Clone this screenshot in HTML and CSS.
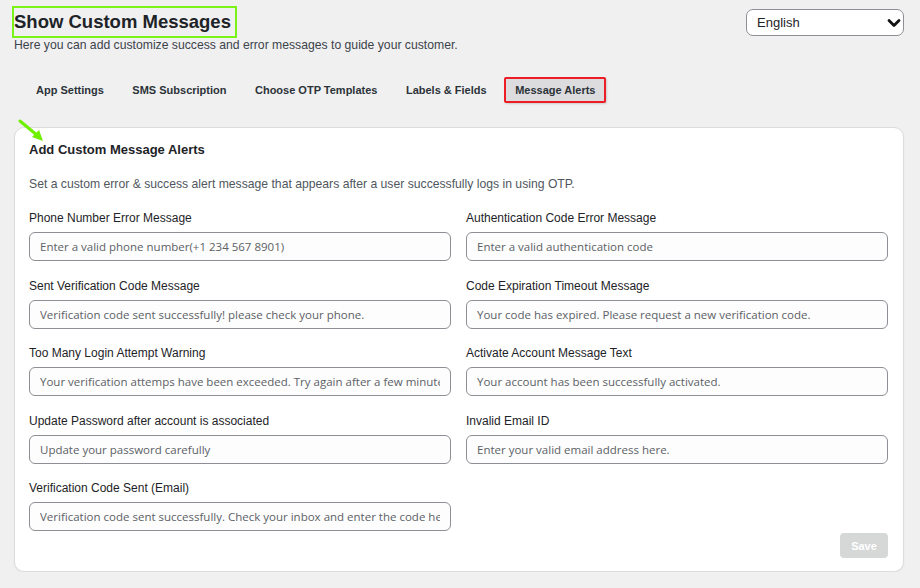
FILE: index.html
```html
<!DOCTYPE html>
<html lang="en">
<head>
  <meta charset="UTF-8" />
  <meta name="viewport" content="width=device-width, initial-scale=1.0"/>
  <title>Show Custom Messages</title>
  <link rel="stylesheet" href="styles.css">
</head>
<body>
  <div class="page">
    <div class="header">
      <div class="intro">
        <h1 class="title">Show Custom Messages</h1>
        <p class="subtitle">Here you can add customize success and error messages to guide your customer.</p>
      </div>
      <div class="lang">
        <select class="lang-select">
          <option>English</option>
        </select>
        <svg class="lang-caret" width="14" height="10" viewBox="0 0 14 10">
          <path d="M2 2.5 L7 7.5 L12 2.5" fill="none" stroke="#111" stroke-width="2.8" stroke-linecap="round" stroke-linejoin="round"/>
        </svg>
      </div>
    </div>

    <nav class="tabs">
      <a class="tab">App Settings</a>
      <a class="tab">SMS Subscription</a>
      <a class="tab">Choose OTP Templates</a>
      <a class="tab">Labels &amp; Fields</a>
      <a class="tab active">Message Alerts</a>
    </nav>

    <div class="card">
      <svg class="pointer" width="30" height="26" viewBox="0 0 30 26">
        <line x1="2" y1="2" x2="20" y2="17" stroke="#6ef000" stroke-width="3" stroke-linecap="round"/>
        <path d="M14 18 L25 22 L21 11 Z" fill="#6ef000"/>
      </svg>
      <h2 class="card-title">Add Custom Message Alerts</h2>
      <p class="card-desc">Set a custom error &amp; success alert message that appears after a user successfully logs in using OTP.</p>

      <div class="fields">
        <div class="field">
          <label>Phone Number Error Message</label>
          <input type="text" placeholder="Enter a valid phone number(+1 234 567 8901)">
        </div>
        <div class="field">
          <label>Authentication Code Error Message</label>
          <input type="text" placeholder="Enter a valid authentication code">
        </div>
        <div class="field">
          <label>Sent Verification Code Message</label>
          <input type="text" placeholder="Verification code sent successfully! please check your phone.">
        </div>
        <div class="field">
          <label>Code Expiration Timeout Message</label>
          <input type="text" placeholder="Your code has expired. Please request a new verification code.">
        </div>
        <div class="field">
          <label>Too Many Login Attempt Warning</label>
          <input type="text" placeholder="Your verification attemps have been exceeded. Try again after a few minutes.">
        </div>
        <div class="field">
          <label>Activate Account Message Text</label>
          <input type="text" placeholder="Your account has been successfully activated.">
        </div>
        <div class="field">
          <label>Update Password after account is associated</label>
          <input type="text" placeholder="Update your password carefully">
        </div>
        <div class="field">
          <label>Invalid Email ID</label>
          <input type="text" placeholder="Enter your valid email address here.">
        </div>
        <div class="field">
          <label>Verification Code Sent (Email)</label>
          <input type="text" placeholder="Verification code sent successfully. Check your inbox and enter the code here.">
        </div>
      </div>

      <div class="actions">
        <button class="save" disabled>Save</button>
      </div>
    </div>
  </div>
</body>
</html>
```

FILE: styles.css
```css
body {
  margin: 0;
  background: #f0f0f1;
  color: #1d2327;
  font-family: "Liberation Sans", Arial, sans-serif;
}

.page {
  padding: 6px 16px 0 12px;
}

.header {
  display: flex;
  justify-content: space-between;
  align-items: flex-start;
}

.title {
  display: inline-block;
  margin: 0;
  padding: 0 4px 0 0;
  border: 2px solid #7cf318;
  font-size: 18.5px;
  line-height: 28px;
  font-weight: bold;
  color: #1d2327;
}

.subtitle {
  margin: 0 0 0 2px;
  font-size: 12.2px;
  line-height: 14px;
  color: #3c434a;
}

.lang {
  position: relative;
  margin-top: 3px;
}

.lang-select {
  appearance: none;
  width: 158px;
  height: 27px;
  padding: 0 10px;
  border: 1px solid #8c8f94;
  border-radius: 7px;
  background: #fff;
  font-family: "Liberation Sans", Arial, sans-serif;
  font-size: 13px;
  color: #1d2327;
}

.lang-caret {
  position: absolute;
  right: 3px;
  top: 9px;
}

.tabs {
  display: flex;
  gap: 6.5px;
  margin: 25px 0 0 13px;
}

.tab {
  padding: 4px 9px;
  border: 2px solid transparent;
  border-radius: 2px;
  font-size: 11px;
  line-height: 14px;
  font-weight: bold;
  color: #2c3338;
}

.tab.active {
  background: #dcdcde;
  border-color: #ee1c25;
  box-shadow: 1px 1px 2px rgba(0, 0, 0, 0.15);
}

.card {
  position: relative;
  margin: 24px 0 0 2px;
  padding: 14px 15px 13px 14px;
  background: #fff;
  border: 1px solid #dcdcde;
  border-radius: 10px;
  box-shadow: 0 1px 2px rgba(0, 0, 0, 0.05);
}

.pointer {
  position: absolute;
  left: 3px;
  top: -9px;
}

.card-title {
  margin: 0;
  font-size: 13px;
  line-height: 16px;
  font-weight: bold;
  color: #1d2327;
}

.card-desc {
  margin: 19px 0 0;
  font-size: 12.2px;
  line-height: 14px;
  color: #50575e;
}

.fields {
  display: grid;
  grid-template-columns: 1fr 1fr;
  column-gap: 15px;
  row-gap: 17.5px;
  margin-top: 20px;
}

.field label {
  display: block;
  margin-bottom: 7px;
  font-size: 12px;
  line-height: 14px;
  color: #1d2327;
}

.field input {
  box-sizing: border-box;
  width: 100%;
  height: 29px;
  padding: 0 10px;
  border: 1px solid #8c8f94;
  border-radius: 6px;
  background: #fdfdfd;
  font-family: "Open Sans", "Noto Sans", sans-serif;
  font-size: 11.5px;
}

.field input::placeholder {
  color: #5c6166;
}

.actions {
  display: flex;
  justify-content: flex-end;
  margin-top: 2px;
}

.save {
  width: 48px;
  height: 25px;
  border: none;
  border-radius: 4px;
  background: #d6d8d8;
  color: #fff;
  font-family: "Liberation Sans", Arial, sans-serif;
  font-size: 11px;
  font-weight: bold;
}
```
